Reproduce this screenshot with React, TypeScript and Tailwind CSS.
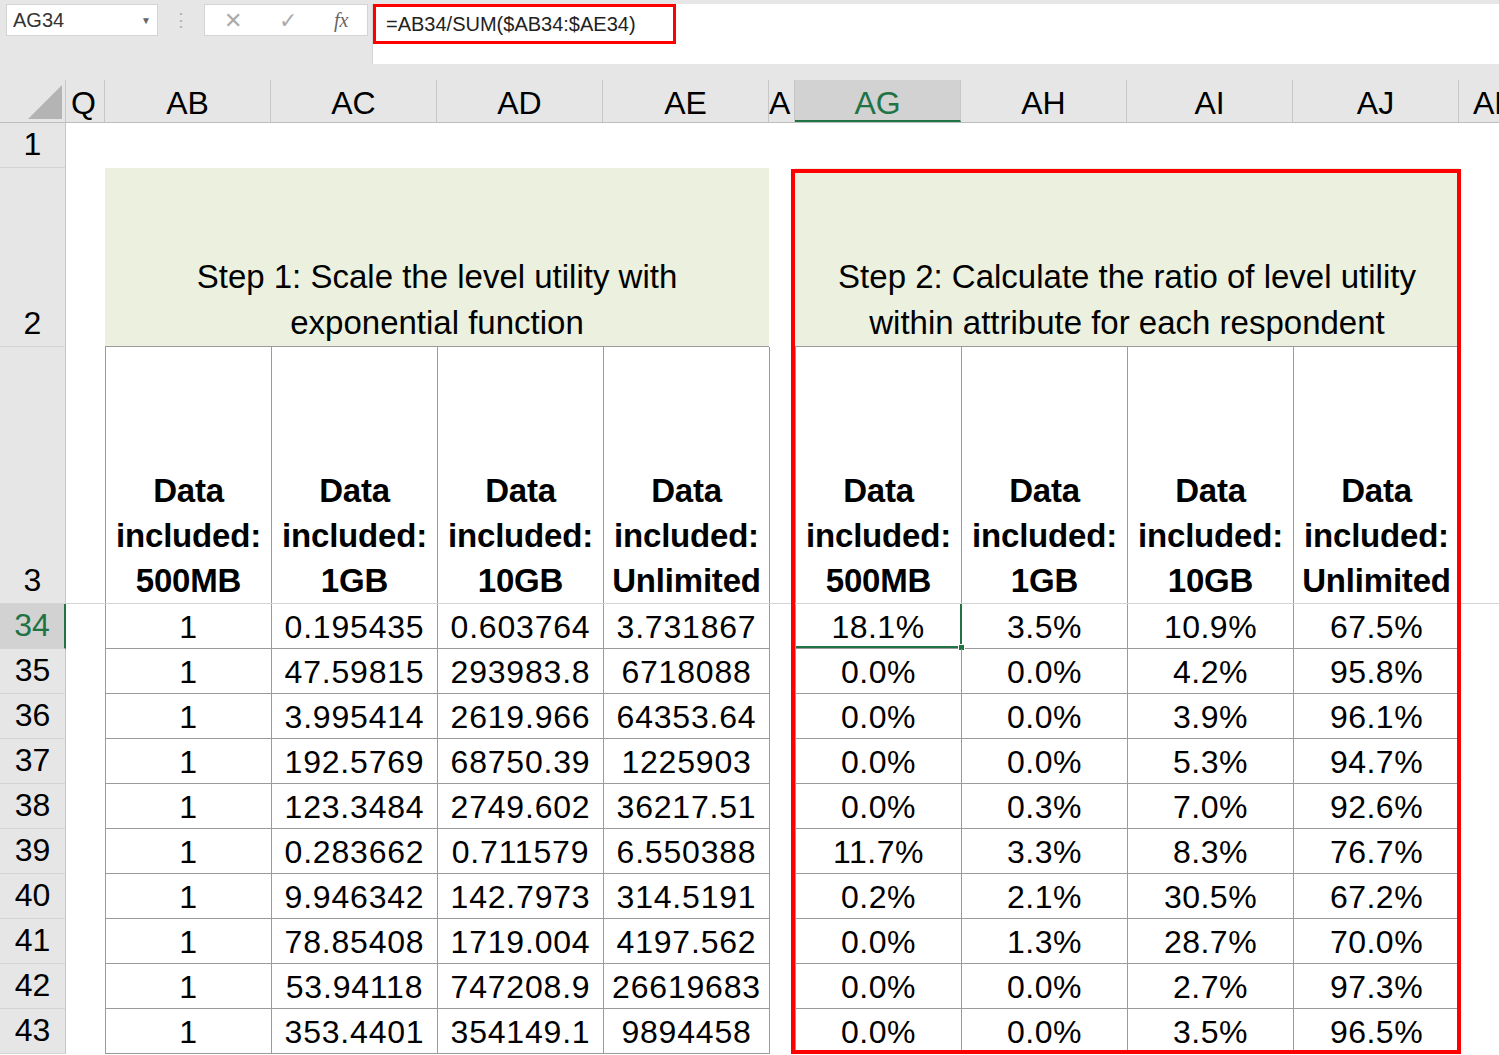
const left = [
  ["1", "0.195435", "0.603764", "3.731867"],
  ["1", "47.59815", "293983.8", "6718088"],
  ["1", "3.995414", "2619.966", "64353.64"],
  ["1", "192.5769", "68750.39", "1225903"],
  ["1", "123.3484", "2749.602", "36217.51"],
  ["1", "0.283662", "0.711579", "6.550388"],
  ["1", "9.946342", "142.7973", "314.5191"],
  ["1", "78.85408", "1719.004", "4197.562"],
  ["1", "53.94118", "747208.9", "26619683"],
  ["1", "353.4401", "354149.1", "9894458"],
];
const right = [
  ["18.1%", "3.5%", "10.9%", "67.5%"],
  ["0.0%", "0.0%", "4.2%", "95.8%"],
  ["0.0%", "0.0%", "3.9%", "96.1%"],
  ["0.0%", "0.0%", "5.3%", "94.7%"],
  ["0.0%", "0.3%", "7.0%", "92.6%"],
  ["11.7%", "3.3%", "8.3%", "76.7%"],
  ["0.2%", "2.1%", "30.5%", "67.2%"],
  ["0.0%", "1.3%", "28.7%", "70.0%"],
  ["0.0%", "0.0%", "2.7%", "97.3%"],
  ["0.0%", "0.0%", "3.5%", "96.5%"],
];
const rowNums = [34, 35, 36, 37, 38, 39, 40, 41, 42, 43];
const heads = ["500MB", "1GB", "10GB", "Unlimited"];

function RowHead({ n, h, active }: { n: string; h: string; active?: boolean }) {
  return (
    <div className={`w-[66px] shrink-0 ${h} flex items-end justify-center border-b border-[#d4d4d4] ${active ? "bg-[#d2d2d2] text-[#217346] border-r-2 border-r-[#217346]" : "bg-[#e6e6e6] border-r border-r-[#c6c6c6]"}`}>
      <span className="leading-[46px]">{n}</span>
    </div>
  );
}

export default function App() {
  return (
    <div className="w-[1499px] h-[1055px] overflow-hidden bg-white relative text-black" style={{ fontFamily: '"Liberation Sans", Arial, sans-serif' }}>
      {/* formula bar */}
      <div className="h-[80px] bg-[#e6e6e6] flex items-start pt-[4px] pl-[6px]">
        <div className="w-[152px] h-[32px] bg-white border border-[#d4d4d4] flex items-center justify-between px-[6px] text-[20px] text-[#333]">
          <span>AG34</span>
          <span className="text-[10px] text-[#666]">▼</span>
        </div>
        <div className="w-[46px] h-[32px] flex items-center justify-center text-[#b0b0b0] text-[18px]">⋮</div>
        <div className="w-[164px] h-[32px] bg-white border border-[#d4d4d4] flex items-center justify-around text-[#aaa] text-[22px]">
          <span>✕</span>
          <span>✓</span>
          <span className="italic text-[#666] text-[20px]" style={{ fontFamily: '"Liberation Serif", serif' }}>fx</span>
        </div>
        <div className="flex-1 ml-[4px] h-[60px] bg-white border-l border-[#d4d4d4] pl-[0px]">
          <div className="w-[303px] h-[40px] border-[3px] border-[#ff0000] flex items-center pl-[10px] text-[20px] text-[#222]">
            =AB34/SUM($AB34:$AE34)
          </div>
        </div>
      </div>

      {/* column headers */}
      <div className="h-[43px] flex bg-[#e6e6e6] border-b border-[#bdbdbd] text-[32px] leading-[46px]">
        <div className="w-[66px] shrink-0 border-r border-[#c6c6c6] relative">
          <svg className="absolute right-[3px] bottom-[3px]" width="34" height="34" viewBox="0 0 34 34"><polygon points="34,0 34,34 0,34" fill="#b4b4b4" /></svg>
        </div>
        <div className="w-[39px] shrink-0 border-r border-[#c6c6c6] overflow-hidden pl-[5px]">Q</div>
        {["AB", "AC", "AD", "AE"].map((c) => (
          <div key={c} className="w-[166px] shrink-0 border-r border-[#c6c6c6] text-center">{c}</div>
        ))}
        <div className="w-[26px] shrink-0 border-r border-[#c6c6c6] overflow-hidden">A</div>
        <div className="w-[166px] shrink-0 bg-[#d2d2d2] text-[#217346] border-b-2 border-[#217346] border-r border-r-[#c6c6c6] text-center">AG</div>
        {["AH", "AI", "AJ"].map((c) => (
          <div key={c} className="w-[166px] shrink-0 border-r border-[#c6c6c6] text-center">{c}</div>
        ))}
        <div className="flex-1 overflow-hidden whitespace-nowrap pl-[14px]">AK</div>
      </div>

      <div className="text-[32px]">
        {/* row 1 */}
        <div className="flex h-[45px]">
          <RowHead n="1" h="h-[45px]" />
        </div>
        {/* row 2 */}
        <div className="flex h-[179px]">
          <RowHead n="2" h="h-[179px]" />
          <div className="w-[39px] shrink-0" />
          <div className="w-[664px] shrink-0 bg-[#ebf1de] flex items-end justify-center text-center text-[33px] leading-[46px] border-b border-[#9b9b9b]">
            <span>Step 1: Scale the level utility with<br />exponential function</span>
          </div>
          <div className="w-[26px] shrink-0" />
          <div className="w-[664px] shrink-0 bg-[#ebf1de] flex items-end justify-center text-center text-[33px] leading-[46px] border-b border-[#9b9b9b]">
            <span>Step 2: Calculate the ratio of level utility<br />within attribute for each respondent</span>
          </div>
        </div>
        {/* row 3 */}
        <div className="flex h-[257px] border-b border-[#d4d4d4]">
          <RowHead n="3" h="h-[257px]" />
          <div className="w-[39px] shrink-0" />
          {[0, 1].map((g) => (
            <div key={g} className="flex">
              <div className="flex border-l border-[#9b9b9b]">
                {heads.map((h) => (
                  <div key={h} className="w-[166px] shrink-0 border-r border-[#9b9b9b] flex items-end justify-center text-center font-bold text-[33px] leading-[45px] tracking-[-0.2px]">
                    <span>Data<br />included:<br />{h}</span>
                  </div>
                ))}
              </div>
              {g === 0 && <div className="w-[25px] shrink-0" />}
            </div>
          ))}
        </div>
        {rowNums.map((n, i) => (
          <div key={n} className="flex h-[45px]">
            <RowHead n={String(n)} h="h-[45px]" active={i === 0} />
            <div className="w-[39px] shrink-0" />
            <div className="flex border-l border-[#9b9b9b] border-b border-b-[#9b9b9b] leading-[46px]">
              {left[i].map((v, j) => (
                <div key={j} className="w-[166px] shrink-0 border-r border-[#9b9b9b] text-center tracking-[0.8px]">{v}</div>
              ))}
            </div>
            <div className="w-[25px] shrink-0" />
            <div className="flex border-l border-[#9b9b9b] border-b border-b-[#9b9b9b] leading-[46px]">
              {right[i].map((v, j) => (
                <div key={j} className={`w-[166px] shrink-0 border-r border-[#9b9b9b] text-center relative tracking-[0.5px] ${i === 0 && j === 0 ? "border-r-2 border-r-[#217346] border-b-2 border-b-[#217346]" : ""}`}>
                  {v}
                  {i === 0 && j === 0 && <div className="absolute -right-[5px] -bottom-[5px] w-[7px] h-[7px] bg-[#217346] border border-white" />}
                </div>
              ))}
            </div>
          </div>
        ))}
      </div>

      {/* red highlight */}
      <div className="absolute left-[791px] top-[169px] w-[670px] h-[885px] border-[4px] border-[#ff0000] pointer-events-none" />
    </div>
  );
}
